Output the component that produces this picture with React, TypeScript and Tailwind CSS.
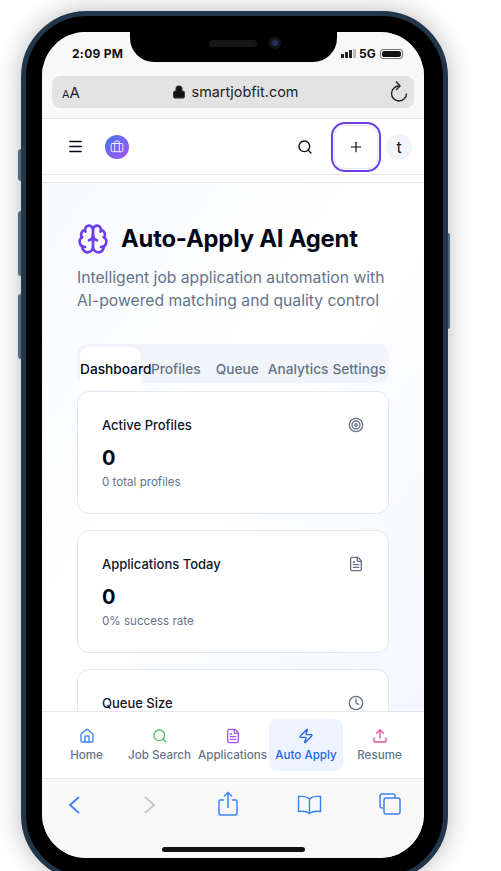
import { Brain, Briefcase, Clock, FileText, House, Menu, Plus, Search, Target, Upload, Zap, Lock } from "lucide-react";
import type { ReactNode } from "react";

const font = "font-['Inter',sans-serif]";

function StatCard({ title, value, note, icon }: { title: string; value?: string; note?: string; icon: ReactNode }) {
  return (
    <div className="h-[123px] shrink-0 rounded-xl border border-[#e2e8f0] bg-white px-6 pt-6">
      <div className="flex h-5 items-center justify-between">
        <span className="text-[13px] font-medium text-[#0f172a]">{title}</span>
        <span className="-mt-[2px]">{icon}</span>
      </div>
      {value && <div className="mt-2 text-xl leading-7 font-bold text-[#020817]">{value}</div>}
      {note && <div className="mt-[2px] text-[11.6px] leading-4 text-[#64748b]">{note}</div>}
    </div>
  );
}

function NavItem({ label, icon, active }: { label: string; icon: ReactNode; active?: boolean }) {
  return (
    <div className={`flex h-[52px] flex-col items-center justify-center gap-[3px] rounded-lg ${active ? "bg-[#eef4ff] text-[#2563eb]" : "text-[#64748b]"}`}>
      {icon}
      <span className="text-[11.6px] leading-4 font-medium whitespace-nowrap">{label}</span>
    </div>
  );
}

function StatusBar() {
  return (
    <div className="relative h-[44px] shrink-0 bg-[#f8f8f8]">
      <span className="absolute left-[30px] top-[14px] text-[12px] leading-4 font-bold tracking-[0.3px] text-[#111]">2:09 PM</span>
      <div className="absolute left-[299px] top-[17px] flex items-end gap-[1px]">
        <i className="h-[4px] w-[3px] bg-[#222]" />
        <i className="h-[6px] w-[3px] bg-[#222]" />
        <i className="h-[8px] w-[3px] bg-[#222]" />
        <i className="h-[9px] w-[3px] bg-[#bbb]" />
      </div>
      <span className="absolute left-[317px] top-[14px] text-[12px] leading-4 font-bold text-[#111]">5G</span>
      <div className="absolute left-[338px] top-[17px] flex h-[10px] w-[23px] items-center rounded-[3px] border border-[#777] p-[1px]">
        <div className="h-full w-full rounded-[2px] bg-[#111]" />
      </div>
    </div>
  );
}

function UrlBar() {
  return (
    <div className="h-[43px] shrink-0 border-b border-[#e2e6ec] bg-[#f8f8f8] px-[10px]">
      <div className="flex h-[32px] items-center justify-between rounded-lg bg-[#e3e3e3] pl-[10px] pr-[4px]">
        <span className="text-[#222]"><span className="text-[11px]">A</span><span className="text-[15px]">A</span></span>
        <div className="ml-[2px] flex items-center gap-[6px] text-[14.4px] text-[#222]">
          <Lock size={14} fill="#111" strokeWidth={2} />
          smartjobfit.com
        </div>
        <svg width="22" height="24" viewBox="0 0 22 24" fill="none" stroke="#222" strokeWidth="1.4">
          <path d="M11 6a7.500 7.500 0 1 0 7.500 7.500" />
          <path d="m8 1.500 4 4.500-4 4" />
        </svg>
      </div>
    </div>
  );
}

function AppHeader() {
  return (
    <div className="flex h-[56px] shrink-0 items-center border-b border-[#e6e9f2] bg-white pl-[25px] pr-[12px]">
      <Menu size={17} className="text-[#020817]" strokeWidth={2} />
      <div className="ml-[21px] flex h-[24px] w-[24px] items-center justify-center rounded-full bg-gradient-to-br from-[#2f76f0] to-[#a24ff0]">
        <Briefcase size={14} className="text-white" strokeWidth={1.5} />
      </div>
      <Search size={16} className="ml-auto text-[#020817]" strokeWidth={2} />
      <div className="ml-[18px] flex h-[50px] w-[50px] items-center justify-center rounded-[14px] border-2 border-[#6d3fe8] bg-white">
        <div className="flex h-[44px] w-[44px] items-center justify-center rounded-[10px] border border-[#e2e8f0]">
          <Plus size={16} className="text-[#020817]" strokeWidth={1.75} />
        </div>
      </div>
      <div className="ml-[5px] flex h-[26px] w-[26px] items-center justify-center rounded-full bg-[#f1f5f9] text-base text-[#0f172a]">t</div>
    </div>
  );
}

function Tabs() {
  return (
    <div className="flex h-[39px] shrink-0 items-start rounded-[10px] bg-[#f1f5f9] pl-[3px] pt-[3px] text-[13.7px] leading-[45px] font-medium whitespace-nowrap text-[#64748b]">
      <div className="z-10 h-[43px] w-[61px] rounded-[10px] bg-white text-[#020817]">Dashboard</div>
      <span className="ml-[10px]">Profiles</span>
      <span className="ml-[15px]">Queue</span>
      <span className="ml-[9px]">Analytics</span>
      <span className="ml-[4px]">Settings</span>
    </div>
  );
}

function BottomNav() {
  return (
    <div className="grid h-[68px] shrink-0 grid-cols-[73px_73px_73px_74px_73px] items-center border-t border-b border-[#e5e7eb] bg-white pl-[8px]">
      <NavItem label="Home" icon={<House size={16} className="text-[#3b82f6]" />} />
      <NavItem label="Job Search" icon={<Search size={16} className="text-[#4fbf67]" />} />
      <NavItem label="Applications" icon={<FileText size={16} className="text-[#a855f7]" />} />
      <NavItem active label="Auto Apply" icon={<Zap size={16} className="text-[#2563eb]" />} />
      <NavItem label="Resume" icon={<Upload size={16} className="text-[#e0559a]" />} />
    </div>
  );
}

function SafariToolbar() {
  return (
    <div className="relative h-[79px] shrink-0 bg-[#f8f8f8]">
      <div className="flex items-start pl-[25px] pt-[15px] text-[#3b82f6]">
        <svg width="16" height="22" viewBox="0 0 16 22" fill="none" stroke="currentColor" strokeWidth="1.8"><path d="M12 3 3 11l9 8" /></svg>
        <svg width="16" height="22" viewBox="0 0 16 22" fill="none" stroke="#c4c4c4" strokeWidth="1.8" className="ml-[58px]"><path d="m4 3 9 8-9 8" /></svg>
        <svg width="20" height="26" viewBox="0 0 20 26" fill="none" stroke="currentColor" strokeWidth="1.5" className="ml-[61px] -mt-[3px]"><path d="M6 9H2.500A1.500 1.500 0 0 0 1 10.500v12A1.500 1.500 0 0 0 2.500 24h15a1.500 1.500 0 0 0 1.500-1.500v-12A1.500 1.500 0 0 0 17.500 9H14M10 17V2M6 5.500 10 1.500 14 5.500" /></svg>
        <svg width="25" height="20" viewBox="0 0 25 20" fill="none" stroke="currentColor" strokeWidth="1.4" className="ml-[59px] mt-[1px]"><path d="M12.500 4C10 1.500 6 1 1.500 1.500v15C6 16 10 16.500 12.500 18.500 15 16.500 19 16 23.500 16.500v-15C19 1 15 1.500 12.500 4ZM12.500 4v14.500" /></svg>
        <svg width="22" height="22" viewBox="0 0 22 22" fill="none" stroke="currentColor" strokeWidth="1.500" className="ml-[57px] -mt-[1px]"><path d="M4 15H3a2 2 0 0 1-2-2V3a2 2 0 0 1 2-2h11a2 2 0 0 1 2 2v2" /><rect x="5" y="5" width="16" height="16" rx="2" /></svg>
      </div>
      <div className="absolute bottom-[6px] left-[120px] h-[5px] w-[143px] rounded-full bg-[#111]" />
    </div>
  );
}

function PhoneChrome() {
  return (
    <>
      <div className="absolute left-[-8px] top-[133px] h-[32px] w-[3px] rounded-l-sm bg-[#4e6b84]" />
      <div className="absolute left-[-8px] top-[195px] h-[65px] w-[3px] rounded-l-sm bg-[#4e6b84]" />
      <div className="absolute left-[-8px] top-[278px] h-[65px] w-[3px] rounded-l-sm bg-[#4e6b84]" />
      <div className="absolute right-[-7px] top-[217px] h-[96px] w-[2px] rounded-r-sm bg-[#4e6b84]" />
      <div className="absolute left-[104px] top-[14px] z-20 h-[32px] w-[207px] rounded-b-[24px] bg-black" />
      <div className="absolute left-[183px] top-[24px] z-30 h-[7px] w-[48px] rounded-full bg-[#161616]" />
      <div className="absolute left-[243px] top-[21px] z-30 flex h-[12px] w-[12px] items-center justify-center rounded-full bg-[#15151c]">
        <div className="h-[6px] w-[6px] rounded-full bg-[#26305c]" />
      </div>
    </>
  );
}

export default function App() {
  return (
    <div className={`relative h-[871px] w-[501px] overflow-hidden bg-white ${font}`}>
      <div className="relative ml-[21px] mt-[11px] h-[870px] w-[427px] rounded-[66px] border-[5px] border-[#22364a] bg-black pl-[16px] pr-[19px] pt-[16px] shadow-[0_0_26px_rgba(0,0,0,0.28)]">
        <PhoneChrome />
        <div className="flex h-[826px] w-[382px] flex-col overflow-hidden rounded-[44px] bg-white">
          <StatusBar />
          <UrlBar />
          <AppHeader />
          <div className="h-[8px] shrink-0 border-b border-[#e5e7eb] bg-white" />
          <main className="flex min-h-0 flex-1 flex-col overflow-hidden bg-gradient-to-br from-[#f8fafc] via-white to-[#f4f7fd] px-[35px] pt-[40px]">
            <div className="flex h-[32px] shrink-0 items-center gap-[12px]">
              <Brain size={32} className="text-[#6d3fe8]" strokeWidth={2} />
              <h1 className="text-[23.8px] font-bold tracking-[-0.2px] whitespace-nowrap text-[#020817]">Auto-Apply AI Agent</h1>
            </div>
            <p className="mt-[11px] text-[15.7px] leading-[23px] text-[#64748b]">Intelligent job application automation with AI-powered matching and quality control</p>
            <div className="mt-[32px]"><Tabs /></div>
            <div className="mt-[8px] flex flex-col gap-[16px]">
              <StatCard title="Active Profiles" value="0" note="0 total profiles" icon={<Target size={16} className="text-[#64748b]" />} />
              <StatCard title="Applications Today" value="0" note="0% success rate" icon={<FileText size={16} className="text-[#64748b]" />} />
              <StatCard title="Queue Size" icon={<Clock size={16} className="text-[#64748b]" />} />
            </div>
          </main>
          <BottomNav />
          <SafariToolbar />
        </div>
      </div>
    </div>
  );
}
